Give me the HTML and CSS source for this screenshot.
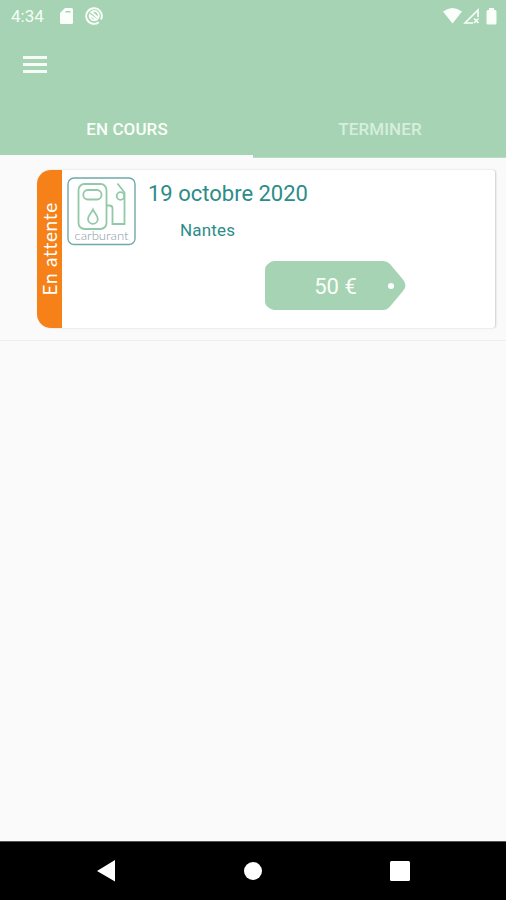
FILE: index.html
```
<!doctype html>
<html lang="fr">
<head>
	<meta charset="utf-8">
	<title>Commandes</title>
	<link rel="stylesheet" href="styles.css">
</head>
<body>
	<header class="header">
		<div class="statusbar">
			<span class="clock">4:34</span>
			<svg class="sd" width="14" height="17" viewBox="0 0 14 17"><path d="M5 0h6.500q1.500 0 1.500 1.500v13q0 1.500-1.500 1.500h-10q-1.500 0-1.500-1.500V5z"/><path class="notch" d="M5.500 3h5v1.500h-5z"/></svg>
			<svg class="sync" width="18" height="18" viewBox="0 0 18 18"><path d="M13.800 15.200A7.800 7.800 0 1 1 16 12.500"/><path d="M5.500 6A4.500 4.500 0 0 1 13 11L6.500 5M4.800 8A4.500 4.500 0 0 0 11.500 12.700z"/></svg>
			<div class="signals">
				<svg width="20" height="16" viewBox="0 0 20 16"><path d="M0 3.500Q9.500-3.500 19 3.500L9.500 15.500z"/></svg>
				<svg class="cell" width="17" height="17" viewBox="0 0 17 17"><path d="M10 15H2L15 2v7M11 10.500l4.500 4.500M15.500 10.500L11 15"/></svg>
				<svg class="battery" width="11" height="17" viewBox="0 0 11 17"><path d="M3 0h5v2h1q1.500 0 1.500 1.500v11.500q0 1.500-1.500 1.500h-7q-1.500 0-1.500-1.500V3.500Q.5 2 2 2h1z"/></svg>
			</div>
		</div>
		<div class="toolbar">
			<div class="burger"><i></i><i></i><i></i></div>
		</div>
		<nav class="tabs">
			<div class="tab active">EN COURS</div>
			<div class="tab">TERMINER</div>
		</nav>
	</header>

	<main class="list">
		<div class="item">
			<div class="card">
				<div class="status"><span>En attente</span></div>
				<svg class="logo" width="69" height="69" viewBox="0 0 69 69">
					<rect class="frame" x="1" y="1" width="67" height="66.500" rx="6"/>
					<g class="pump">
						<rect x="11.500" y="7" width="28" height="45" rx="6"/>
						<rect x="16.300" y="13" width="18.200" height="9.500" rx="4.500"/>
						<path d="M26 32.500C24.500 36 21 38.500 21 42a4.900 4.900 0 0 0 9.800 0C30.800 38.500 27.500 36 26 32.500z"/>
						<path d="M39.500 28.500h3q3 0 3 3v15.500h12V15.500L50.500 6.500"/>
						<circle cx="53.500" cy="19" r="3.800"/>
					</g>
					<text x="7.500" y="62.500" textLength="54" lengthAdjust="spacingAndGlyphs">carburant</text>
				</svg>
				<div class="details">
					<div class="date">19 octobre 2020</div>
					<div class="city">Nantes</div>
					<div class="price">
						<svg width="141" height="49" viewBox="0 0 141 49"><path d="M9 0H118Q122 0 125 3L138 18.500Q143 24.500 138 30L125 45.500Q122 49 118 49H9Q6 49 3 46Q0 44 0 40V9Q0 5 3 3Q6 0 9 0z"/><circle cx="126" cy="25" r="3"/></svg>
						<span>50 €</span>
					</div>
				</div>
			</div>
		</div>
	</main>

	<footer class="navbar">
		<svg width="18" height="22" viewBox="0 0 18 22"><path d="M18 0v21.500L0 11z"/></svg>
		<svg width="18" height="18" viewBox="0 0 18 18"><circle cx="9" cy="9" r="9"/></svg>
		<svg width="20" height="20" viewBox="0 0 20 20"><rect width="20" height="20" rx="1.500"/></svg>
	</footer>
</body>
</html>
```
FILE: styles.css
```
* {
	box-sizing: border-box;
}

body {
	margin: 0;
	height: 900px;
	display: flex;
	flex-direction: column;
	background: #fafafa;
	font-family: Roboto, sans-serif;
	overflow: hidden;
}

svg {
	display: block;
	flex: none;
}

/* header */
.header {
	height: 158px;
	background: #a6d3b3;
	border-bottom: 1px solid #b9dcc3;
	flex: none;
}

.statusbar {
	height: 32px;
	display: flex;
	align-items: center;
	padding: 0 9px 0 11px;
	fill: #fafffa;
	color: #f4fff6;
}

.clock {
	width: 49px;
	font-size: 17px;
}

.sd .notch {
	fill: #a6d3b3;
}

.sync {
	margin-left: 11px;
	fill: none;
	stroke: #fafffa;
	stroke-width: 1.9;
}

.signals {
	display: flex;
	align-items: center;
	margin-left: auto;
}

.cell {
	fill: none;
	stroke: #fafffa;
	stroke-width: 1.6;
}

.battery {
	margin-left: 6px;
}

.toolbar {
	height: 68px;
	padding: 24px 23px;
}

.burger {
	width: 24px;
	display: flex;
	flex-direction: column;
	gap: 4px;
}

.burger i {
	height: 3px;
	background: #f6fbf7;
}

.tabs {
	display: flex;
	height: 58px;
}

.tab {
	flex: 1;
	display: flex;
	align-items: center;
	justify-content: center;
	font-size: 17px;
	font-weight: 500;
	letter-spacing: .1px;
	color: #d6eedd;
	border-bottom: 3px solid transparent;
	padding: 3px 0 0 1px;
}

.tab.active {
	color: #fafffa;
	border-bottom-color: #fafafa;
}

/* list */
.list {
	flex: 1;
}

.item {
	height: 183px;
	padding: 12px 11px 0 37px;
	border-bottom: 1px solid #eee;
}

.card {
	height: 158px;
	display: flex;
	background: #fff;
	border-radius: 14px 3px 3px 14px;
	box-shadow: 1px 0 2px rgba(0, 0, 0, .18);
}

.status {
	width: 25px;
	display: flex;
	align-items: center;
	justify-content: center;
	background: #f58118;
	border-radius: 14px 0 0 14px;
	color: #fff;
	font: 19px Lato, sans-serif;
	letter-spacing: .7px;
}

.status span {
	writing-mode: vertical-rl;
	transform: rotate(180deg);
	white-space: nowrap;
}

.logo {
	margin: 7px 0 0 5px;
}

.logo .frame {
	fill: none;
	stroke: #6fa9aa;
	stroke-width: 1.4;
}

.pump {
	fill: none;
	stroke: #91c9a9;
	stroke-width: 1.8;
}

.logo text {
	fill: #879da1;
	font: 300 11px Lato, sans-serif;
}

.details {
	flex: 1;
	padding: 10px 0 0 12px;
	color: #2d8c89;
}

.date {
	font-size: 22px;
	line-height: 28px;
}

.city {
	margin: 12px 0 0 32px;
	font-size: 17px;
	line-height: 20px;
	letter-spacing: .2px;
}

.price {
	display: grid;
	width: 141px;
	height: 49px;
	margin: 21px 0 0 117px;
	align-items: center;
	justify-items: center;
	color: #fafffa;
	font-size: 22px;
}

.price svg,
.price span {
	grid-area: 1 / 1;
}

.price span {
	padding-top: 2px;
}

.price path {
	fill: #a6d3b3;
}

.price circle {
	fill: #fff;
}

/* android buttons */
.navbar {
	height: 59px;
	display: flex;
	align-items: center;
	justify-content: space-between;
	padding: 0 96px 0 97px;
	background: #000;
	border-top: 1px solid #555;
	fill: #fff;
}
```
